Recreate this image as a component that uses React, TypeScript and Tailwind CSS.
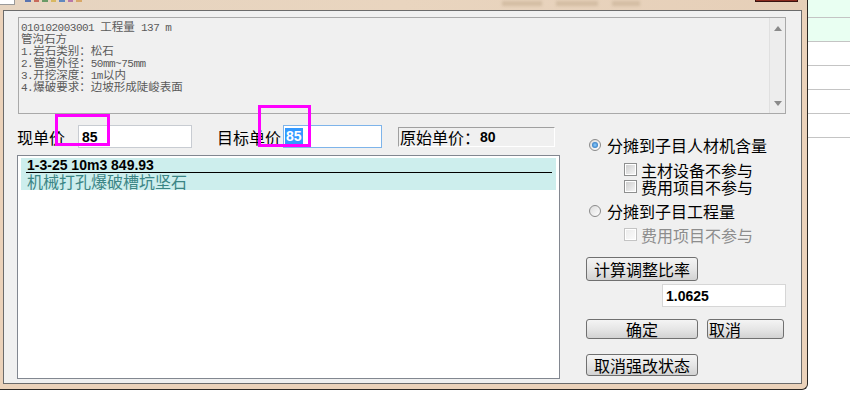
import React from "react";

const cjk = "font-['Noto_Sans_CJK_SC',sans-serif]";
const latinBold = "font-['Liberation_Sans',sans-serif] font-bold text-[14px]";

const M: React.FC<{ children: React.ReactNode }> = ({ children }) => (
  <span className="block whitespace-pre font-['Liberation_Mono',monospace] text-[11px] leading-[12px] tracking-[-0.5px]">
    {children}
  </span>
);

const C: React.FC<{ children: React.ReactNode }> = ({ children }) => (
  <span className="block whitespace-pre text-[11.5px] leading-[12px]">{children}</span>
);

const Line: React.FC<{ children: React.ReactNode }> = ({ children }) => (
  <div className="h-[12px] flex items-baseline">{children}</div>
);

const Radio: React.FC<{ checked?: boolean }> = ({ checked }) => (
  <span className="w-[12px] h-[12px] rounded-full border border-[#8a8a8a] bg-linear-to-br from-[#dcdcdc] to-[#ffffff] flex items-center justify-center shrink-0">
    {checked && (
      <span className="w-[6px] h-[6px] rounded-full bg-radial from-[#8fd0ff] to-[#0f5fae]" />
    )}
  </span>
);

const Check: React.FC<{ disabled?: boolean }> = ({ disabled }) => (
  <span
    className={
      disabled
        ? "w-[13px] h-[13px] border border-[#c4c4c4] bg-white flex items-center justify-center shrink-0"
        : "w-[13px] h-[13px] border border-[#8e8f8f] bg-white flex items-center justify-center shrink-0"
    }
  >
    <span
      className={
        disabled
          ? "w-[9px] h-[9px] bg-linear-to-br from-[#ececec] to-[#fafafa]"
          : "w-[9px] h-[9px] bg-linear-to-br from-[#cfcfcf] to-[#f4f4f4]"
      }
    />
  </span>
);

const Btn: React.FC<{ className: string; children: React.ReactNode }> = ({ className, children }) => (
  <div
    className={`${className} border border-[#707070] rounded-[3px] bg-linear-to-b from-[#f4f4f4] via-[#e6e6e6] to-[#d2d2d2] flex items-center text-[16px] leading-[16px] text-black ${cjk}`}
  >
    <span className="block leading-[16px]">{children}</span>
  </div>
);

export default function App() {
  return (
    <div className="relative w-[850px] h-[416px] bg-white overflow-hidden flex items-start">
      {/* dialog window */}
      <div className="w-[808px] h-[390px] bg-[#ebd2ba] border-r border-b border-[#2c2824] rounded-br-[6px] flex flex-col">
        {/* title bar (cut off) */}
        <div className="h-[10px] flex items-start bg-linear-to-r from-[#e6d4c0] via-[#e9d5bf] to-[#e6cfb8]">
          <div className="w-[15px] h-[5px] bg-white border-r border-b border-[#9a9a9a]" />
          <div className="ml-[10px] flex gap-[3px] blur-[0.5px]">
            <span className="w-[6px] h-[2px] bg-[#5a74b0]" />
            <span className="w-[5px] h-[2px] bg-[#c86a5a]" />
            <span className="w-[6px] h-[2px] bg-[#6a9a66]" />
            <span className="w-[5px] h-[2px] bg-[#d8b860]" />
            <span className="w-[6px] h-[2px] bg-[#6088c0]" />
            <span className="w-[5px] h-[2px] bg-[#b878a8]" />
            <span className="w-[6px] h-[2px] bg-[#d8a868]" />
          </div>
          <div className="ml-[420px] flex gap-[14px] mt-[1px] blur-[1.5px]">
            <span className="w-[40px] h-[5px] bg-[#d3bda3]" />
            <span className="w-[42px] h-[5px] bg-[#d3bda3]" />
            <span className="w-[28px] h-[5px] bg-[#d3bda3]" />
          </div>
          <div className="ml-auto mr-[9px] w-[43px] h-[2px] bg-[#8a2a1e] border-x border-b border-[#3a1410]" />
        </div>

        {/* client area */}
        <div className="ml-[3px] w-[799px] h-[374px] bg-[#f0f0f0] border border-[#6b6b6b] pl-[13px] pt-[6px]">
          {/* description memo */}
          <div className="ml-[1px] w-[768px] h-[97px] border border-[#a9a9a9] flex">
            <div className={`flex-1 pl-[2px] pt-[2px] text-[#5a5a5a] ${cjk}`}>
              <Line>
                <M>010102003001 </M>
                <C>工程量</C>
                <M> 137 m</M>
              </Line>
              <Line>
                <C>管沟石方</C>
              </Line>
              <Line>
                <M>1.</M>
                <C>岩石类别：松石</C>
              </Line>
              <Line>
                <M>2.</M>
                <C>管道外径：</C>
                <M>50mm~75mm</M>
              </Line>
              <Line>
                <M>3.</M>
                <C>开挖深度：</C>
                <M>1m</M>
                <C>以内</C>
              </Line>
              <Line>
                <M>4.</M>
                <C>爆破要求：边坡形成陡峻表面</C>
              </Line>
            </div>
            <div className="w-[16px] border-l border-[#e0e0e0] bg-[#ededed] flex flex-col justify-between items-center pt-[8px] pb-[7px]">
              <svg width="8" height="5" viewBox="0 0 8 5">
                <path d="M0 5 L4 0 L8 5 Z" fill="#8a8a8a" />
              </svg>
              <svg width="8" height="5" viewBox="0 0 8 5">
                <path d="M0 0 L8 0 L4 5 Z" fill="#8a8a8a" />
              </svg>
            </div>
          </div>

          <div className="mt-[11px] flex">
            {/* left column */}
            <div className="w-[543px]">
              <div className={`h-[23px] flex items-center text-[16px] text-black ${cjk}`}>
                <span className="block w-[61px] leading-[16px]">现单价</span>
                <div className="w-[114px] h-[23px] bg-white border border-[#c8ccd2] flex items-center pl-[3px]">
                  <span className={`block ${latinBold} leading-[14px]`}>85</span>
                </div>
                <span className="block ml-[25px] w-[66px] leading-[16px]">目标单价</span>
                <div className="w-[99px] h-[23px] bg-white border border-[#7eb4ea] flex items-center pl-[1px]">
                  <span className={`block ${latinBold} leading-[17px] bg-[#3399ff] text-white px-[1px]`}>85</span>
                </div>
                <div className="ml-[16px] w-[157px] h-[20px] border border-[#a0a0a0] border-r-white border-b-white bg-[#f0f0f0] flex items-center pl-[1px]">
                  <span className="block leading-[16px]">原始单价：</span>
                  <span className={`block ${latinBold} leading-[14px]`}>80</span>
                </div>
              </div>

              {/* list box */}
              <div className="mt-[7px] h-[224px] border border-[#828790] bg-white pt-[2px] pl-[3px]">
                <div className="w-[535px] h-[32px] bg-[#cdeeed] flex flex-col">
                  <div className={`h-[14px] pl-[6px] ${latinBold} leading-[14px] text-black`}>
                    1-3-25 10m3 849.93
                  </div>
                  <div className="ml-[5px] w-[526px] h-[1px] bg-black" />
                  <div className={`h-[17px] pl-[6px] text-[16px] leading-[17px] text-[#3b8585] ${cjk}`}>
                    机械打孔爆破槽坑坚石
                  </div>
                </div>
              </div>
            </div>

            {/* right column */}
            <div className={`ml-[25px] w-[201px] pt-[11px] text-[16px] text-black ${cjk}`}>
              <div className="h-[18px] flex items-center gap-[6px] pl-[4px]">
                <Radio checked />
                <span className="block leading-[16px]">分摊到子目人材机含量</span>
              </div>
              <div className="mt-[7px] h-[17px] flex items-center gap-[4px] pl-[39px]">
                <Check />
                <span className="block leading-[16px]">主材设备不参与</span>
              </div>
              <div className="h-[17px] flex items-center gap-[4px] pl-[39px]">
                <Check />
                <span className="block leading-[16px]">费用项目不参与</span>
              </div>
              <div className="mt-[7px] h-[18px] flex items-center gap-[6px] pl-[4px]">
                <Radio />
                <span className="block leading-[16px]">分摊到子目工程量</span>
              </div>
              <div className="mt-[6px] h-[17px] flex items-center gap-[4px] pl-[39px] text-[#8d8d8d]">
                <Check disabled />
                <span className="block leading-[16px]">费用项目不参与</span>
              </div>

              <Btn className="mt-[14px] ml-[1px] w-[112px] h-[24px] justify-center">计算调整比率</Btn>
              <div className="mt-[3px] ml-[77px] w-[124px] h-[23px] bg-white border border-[#d6d6d6] flex items-center pl-[3px]">
                <span className={`block ${latinBold} leading-[14px]`}>1.0625</span>
              </div>
              <div className="mt-[12px] flex">
                <Btn className="ml-[1px] w-[112px] h-[20px] justify-center">确定</Btn>
                <Btn className="ml-[9px] w-[77px] h-[20px] pl-[1px]">取消</Btn>
              </div>
              <Btn className="mt-[15px] ml-[1px] w-[112px] h-[22px] justify-center">取消强改状态</Btn>
            </div>
          </div>
        </div>
      </div>

      {/* background sheet on the right */}
      <div className="flex-1 h-full flex flex-col">
        <div className="h-[18px] bg-[#e9fff2] border-b border-[#c4c4c4]" />
        <div className="h-[24px] bg-[#e9fff2] border-b border-[#c4c4c4]" />
        <div className="h-[24px] border-b border-[#c4c4c4]" />
        <div className="h-[24px] border-b border-[#c4c4c4]" />
        <div className="h-[24px] border-b border-[#c4c4c4]" />
        <div className="h-[24px] border-b border-[#c4c4c4]" />
      </div>

      {/* magenta annotation boxes */}
      <div className="absolute left-[55px] top-[114px] w-[55px] h-[32px] border-[3px] border-[#ff00ff]" />
      <div className="absolute left-[258px] top-[105px] w-[53px] h-[42px] border-[3px] border-[#ff00ff]" />
    </div>
  );
}
